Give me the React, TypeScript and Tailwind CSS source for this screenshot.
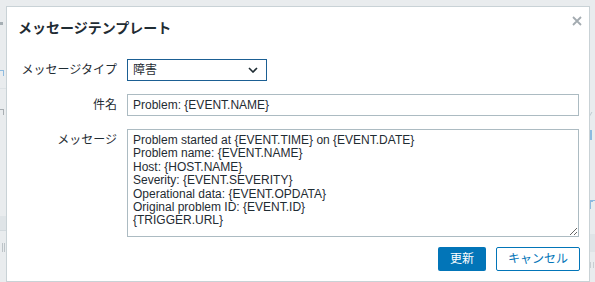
import React from "react";

const jp = { fontFamily: '"Liberation Sans", "Noto Sans CJK JP", sans-serif' };

export default function App() {
  const message = `Problem started at {EVENT.TIME} on {EVENT.DATE}
Problem name: {EVENT.NAME}
Host: {HOST.NAME}
Severity: {EVENT.SEVERITY}
Operational data: {EVENT.OPDATA}
Original problem ID: {EVENT.ID}
{TRIGGER.URL}`;

  return (
    <div className="relative w-[595px] h-[282px] overflow-hidden bg-[#e9ecee]" style={jp}>
      {/* dimmed background page */}
      <div className="flex h-full w-full">
        <div className="w-[6px] h-full flex flex-col">
          <div className="h-[22px]" />
          <div className="h-[3px] w-[3px] bg-[#a6afb4]" />
          <div className="h-[45px]" />
          <div className="h-[6px] w-[4px] border-t border-r border-[#8dbbe0]" />
          <div className="h-[12px]" />
          <div className="h-px bg-[#dde2e5]" />
          <div className="h-[20px]" />
          <div className="h-[6px] w-[4px] border-t border-r border-[#a8aeb2]" />
          <div className="h-[101px]" />
          <div className="h-[14px] bg-[#dfe4e7]" />
          <div className="h-px bg-[#d3dade]" />
          <div className="h-[12px]" />
          <div className="h-[9px] w-[3px] ml-[2px] border-x border-[#bcc3c7]" />
        </div>
        <div className="flex-1" />
        <div className="w-[5px] h-full flex flex-col">
          <div className="h-[112px]" />
          <div className="h-[5px] w-[4px] border-l border-[#bfcad0] -skew-x-[30deg]" />
          <div className="h-[13px]" />
          <div className="h-[10px] w-[4px] border-l-2 border-[#8dbbe0]" />
          <div className="h-[60px]" />
          <div className="h-px bg-[#8dbbe0]" />
          <div className="h-[8px] w-[3px] border-l border-t border-[#8dbbe0]" />
          <div className="h-[25px]" />
          <div className="h-[18px] bg-[#dfe4e7]" />
          <div className="h-[10px]" />
          <div className="h-[6px] w-[4px] border-x border-[#c8ced1]" />
        </div>
      </div>

      {/* modal */}
      <div className="absolute left-[6px] top-[6px] w-[584px] h-[276px] bg-white border border-[#c9d2d6] flex flex-col">
        <div className="flex items-start justify-between pl-[11px] pr-[7px] pt-[11px]">
          <div className="text-[14px] leading-[20px] font-bold text-[#1f2c33]">メッセージテンプレート</div>
          <svg width="10" height="10" viewBox="0 0 10 10" className="-mt-[2px]">
            <path d="M1 1 L9 9 M9 1 L1 9" stroke="#a3abb0" strokeWidth="1.8" />
          </svg>
        </div>

        <div className="mt-[21px] grid grid-cols-[110px_1fr] gap-x-[10px] gap-y-[13px] pr-[10px] text-[12px] text-[#1f2c33]">
          <div className="flex items-center justify-end h-[22px]">メッセージタイプ</div>
          <div>
            <div className="w-[140px] h-[22px] border border-[#1b5f93] flex items-center justify-between pl-[5px] pr-[8px]">
              <span>障害</span>
              <svg width="10" height="6" viewBox="0 0 10 6">
                <path d="M1 1 L5 5 L9 1" fill="none" stroke="#1f2c33" strokeWidth="1.6" />
              </svg>
            </div>
          </div>

          <div className="flex items-center justify-end h-[22px]">件名</div>
          <div className="h-[22px] border border-[#acbbc2] flex items-center px-[5px]">
            Problem: {"{EVENT.NAME}"}
          </div>

          <div className="flex justify-end pt-[4px] leading-[15px]">メッセージ</div>
          <textarea
            readOnly
            defaultValue={message}
            className="block w-full h-[108px] border border-[#acbbc2] px-[5px] pt-[4px] text-[12px] leading-[13.4px] text-[#1f2c33] outline-none overflow-hidden"
            style={jp}
          />
        </div>

        <div className="mt-[10px] pr-[9px] flex justify-end gap-[10px] text-[12px]">
          <button className="w-[48px] h-[24px] rounded-[2px] bg-[#0275b8] text-white flex items-center justify-center">
            更新
          </button>
          <button className="w-[84px] h-[24px] rounded-[2px] bg-white border border-[#0275b8] text-[#0275b8] flex items-center justify-center">
            キャンセル
          </button>
        </div>
      </div>
    </div>
  );
}
